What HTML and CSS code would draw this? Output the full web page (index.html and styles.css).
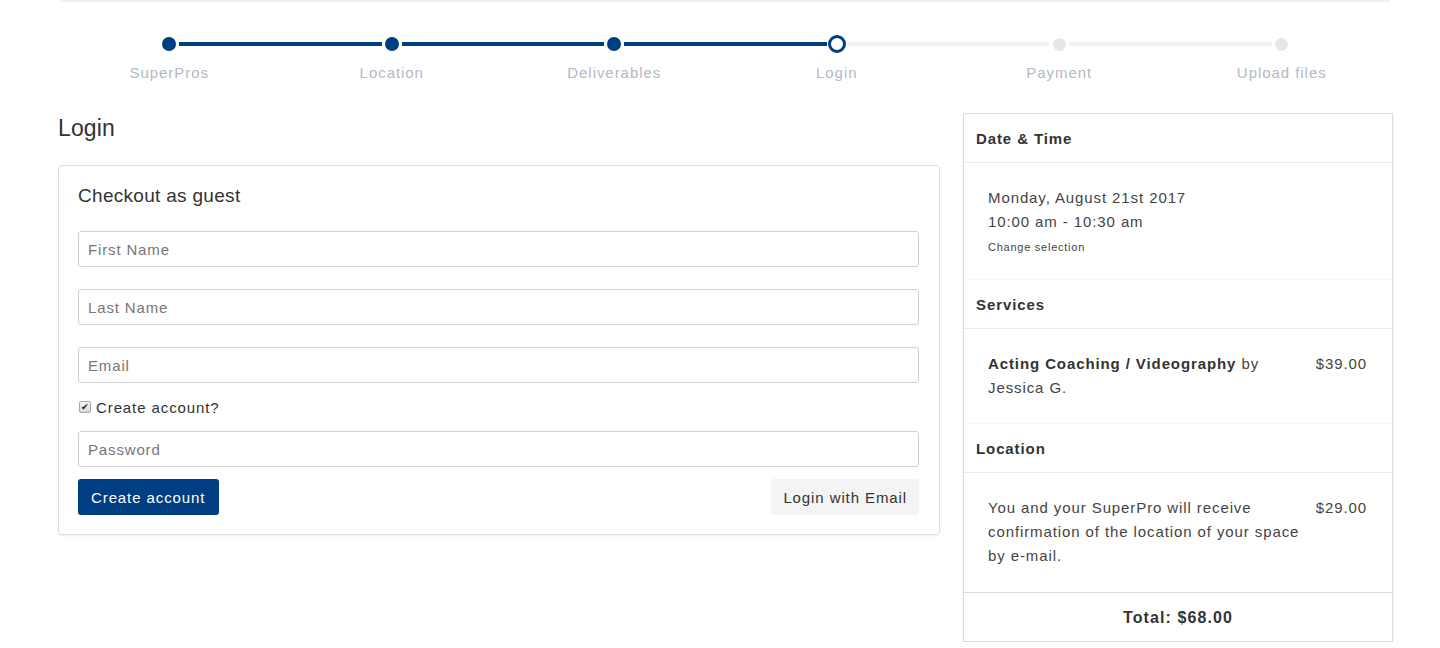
FILE: index.html
```html
<!DOCTYPE html>
<html>
<head>
<meta charset="utf-8">
<link rel="stylesheet" href="styles.css">
</head>
<body>
<div class="topline"></div>
<div class="container">
  <div class="stepper">
    <div class="track">
      <span class="dotbox"><span class="dot done"></span></span>
      <span class="line done"></span>
      <span class="dotbox"><span class="dot done"></span></span>
      <span class="line done"></span>
      <span class="dotbox"><span class="dot done"></span></span>
      <span class="line done"></span>
      <span class="dotbox"><span class="dot current"></span></span>
      <span class="line"></span>
      <span class="dotbox"><span class="dot"></span></span>
      <span class="line"></span>
      <span class="dotbox"><span class="dot"></span></span>
    </div>
    <div class="labels">
      <span>SuperPros</span>
      <span>Location</span>
      <span>Deliverables</span>
      <span>Login</span>
      <span>Payment</span>
      <span>Upload files</span>
    </div>
  </div>

  <div class="main">
    <div class="left">
      <h1 class="page-title">Login</h1>
      <div class="card">
        <h2 class="card-title">Checkout as guest</h2>
        <input class="field" type="text" placeholder="First Name">
        <input class="field" type="text" placeholder="Last Name">
        <input class="field" type="text" placeholder="Email">
        <label class="check"><span class="box">&#10004;</span>Create account?</label>
        <input class="field" type="password" placeholder="Password">
        <div class="actions">
          <button class="btn btn-primary">Create account</button>
          <button class="btn btn-light">Login with Email</button>
        </div>
      </div>
    </div>

    <aside class="summary">
      <div class="s-head">Date &amp; Time</div>
      <div class="s-body dt">
        <div>Monday, August 21st 2017</div>
        <div>10:00 am - 10:30 am</div>
        <div class="small">Change selection</div>
      </div>
      <div class="s-head sep">Services</div>
      <div class="s-body item">
        <div class="desc"><strong>Acting Coaching / Videography</strong> by Jessica G.</div>
        <div class="price">$39.00</div>
      </div>
      <div class="s-head sep">Location</div>
      <div class="s-body item last">
        <div class="desc">You and your SuperPro will receive confirmation of the location of your space by e-mail.</div>
        <div class="price">$29.00</div>
      </div>
      <div class="s-foot">Total: $68.00</div>
    </aside>
  </div>
</div>
</body>
</html>
```

FILE: styles.css
```css
* { box-sizing: border-box; }
html, body { margin: 0; padding: 0; background: #fff; }
body {
  font-family: "Liberation Sans", Arial, sans-serif;
  color: #333;
  font-size: 15px;
  letter-spacing: 0.9px;
}
.topline {
  height: 2px;
  margin: 0 50px 0 60px;
  background: #f1f1f1;
}
.container {
  width: 1335px;
  margin-left: 58px;
}
.stepper { padding-top: 33px; }
.track {
  display: flex;
  align-items: center;
  height: 18px;
  padding: 0 102px 0 102px;
}
.dotbox {
  width: 18px;
  height: 18px;
  display: flex;
  align-items: center;
  justify-content: center;
  flex: none;
}
.dot {
  width: 13px;
  height: 13px;
  border-radius: 50%;
  background: #e5e7ec;
}
.dot.done { width: 14px; height: 14px; background: #003e83; }
.dot.current {
  width: 18px; height: 18px;
  background: #fff;
  border: 3px solid #003e83;
}
.line {
  flex: 1;
  height: 4px;
  margin: 0 1px;
  background: #f0f1f4;
}
.line.done { background: #003e83; }
.labels {
  display: grid;
  grid-template-columns: repeat(6, 1fr);
  margin-top: 10px;
  color: #b3b8c8;
  font-size: 15px;
  line-height: 20px;
  text-align: center;
  letter-spacing: 0.95px;
}
.main {
  display: flex;
  gap: 23px;
  margin-top: 30px;
  align-items: flex-start;
}
.left { width: 882px; flex: none; }
.page-title {
  margin: 0;
  font-size: 23px;
  font-weight: normal;
  line-height: 30px;
  color: #333;
  letter-spacing: 0.1px;
}
.card {
  margin-top: 22px;
  border: 1px solid #dedede;
  border-radius: 4px;
  box-shadow: 0 1px 2px rgba(0,0,0,0.08);
  padding: 18px 20px 19px 19px;
}
.card-title {
  margin: 0 0 23px 0;
  font-size: 19px;
  font-weight: normal;
  line-height: 24px;
  color: #333;
  letter-spacing: 0.3px;
}
.field {
  display: block;
  width: 100%;
  height: 36px;
  margin: 0 0 22px 0;
  padding: 0 9px;
  border: 1px solid #d0d0d0;
  border-radius: 3px;
  font-family: inherit;
  font-size: 15px;
  letter-spacing: 0.85px;
  color: #333;
  background: #fff;
}
.field::placeholder { color: #777; }
.check {
  display: flex;
  align-items: center;
  gap: 5px;
  height: 24px;
  margin: -10px 0 12px 1px;
  font-size: 15px;
  letter-spacing: 0.9px;
  color: #333;
}
.box {
  width: 12px;
  height: 12px;
  border: 1px solid #a8a8a8;
  border-radius: 2px;
  background: linear-gradient(#f4f4f4, #d9d9d9);
  color: #222;
  font-size: 9px;
  line-height: 10px;
  text-align: center;
  letter-spacing: 0;
  flex: none;
}
.check + .field { margin-bottom: 12px; }
.actions {
  display: flex;
  justify-content: space-between;
}
.btn {
  height: 36px;
  padding: 0 13px;
  border: 0;
  border-radius: 3px;
  font-family: inherit;
  font-size: 15px;
  letter-spacing: 0.9px;
}
.btn-primary { background: #003e83; color: #fff; padding-right: 14px; }
.btn-light { background: #f4f4f4; color: #333; padding: 0 12px; }
.summary {
  width: 430px;
  flex: none;
  border: 1px solid #dcdcdc;
  box-shadow: 0 1px 2px rgba(0,0,0,0.08);
}
.s-head {
  padding: 13px 12px 11px 12px;
  line-height: 24px;
  font-weight: bold;
  font-size: 15px;
  color: #333;
  border-bottom: 1px solid #ebebeb;
}
.s-head.sep { border-top: 1px solid #f7f7f7; }
.s-body {
  padding: 23px 25px 25px 24px;
  line-height: 24px;
  color: #444;
}
.s-body.dt { padding-bottom: 25px; }
.small {
  font-size: 11px;
  line-height: 14px;
  margin-top: 6px;
  letter-spacing: 0.75px;
}
.item { display: flex; justify-content: space-between; gap: 8px; padding-bottom: 23px; }
.item.last { padding-bottom: 24px; }
.desc { width: 321px; }
.desc strong { color: #333; }
.price { white-space: nowrap; }
.s-foot {
  border-top: 1px solid #dcdcdc;
  padding: 13px 12px 11px 12px;
  line-height: 24px;
  text-align: center;
  font-weight: bold;
  font-size: 16px;
  letter-spacing: 1.1px;
  color: #333;
}
```
